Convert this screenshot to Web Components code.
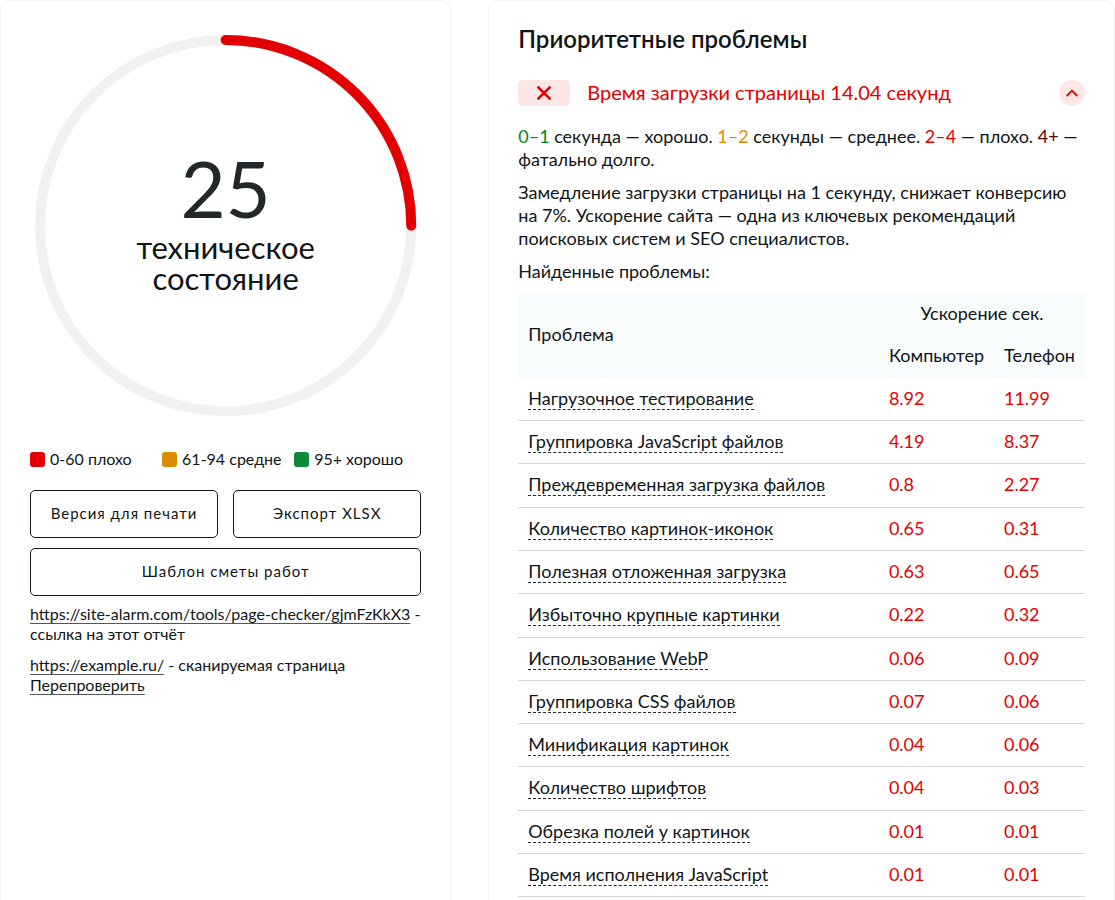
<!DOCTYPE html>
<html lang="ru">
<head>
<meta charset="utf-8">
<meta name="viewport" content="width=device-width, initial-scale=1">
<title>Проверка страницы</title>
<style>
  html { background: #fff; }
  body {
    margin: 0;
    color: #111516;
    font-family: Lato, "Open Sans", sans-serif;
    font-size: 18px;
    line-height: 1.24;
    --red: #e30000;
    --amber: #d98c00;
    --green: #0c8836;
  }
</style>
</head>
<body>
<report-page>
  <report-card slot="summary">
    <score-gauge value="25">техническое состояние</score-gauge>
    <score-legend></score-legend>
    <report-actions></report-actions>
    <report-links></report-links>
  </report-card>
  <report-card slot="details">
    <issue-list heading="Приоритетные проблемы">
      <issue-item heading="Время загрузки страницы 14.04 секунд">
        <load-notes></load-notes>
        <problem-table></problem-table>
      </issue-item>
    </issue-list>
  </report-card>
</report-page>

<script>
const define = (name, html, setup) => {
  const template = document.createElement('template');
  template.innerHTML = html;
  customElements.define(name, class extends HTMLElement {
    connectedCallback() {
      if (this.shadowRoot) return;
      const root = this.attachShadow({ mode: 'open' });
      root.append(template.content.cloneNode(true));
      if (setup) setup(root, this);
    }
  });
};

define('report-page', `
  <style>
    :host { display: block; }
    main { display: grid; grid-template-columns: minmax(0, 18fr) minmax(0, 25fr); column-gap: 37px; }
    @media (max-width: 760px) { main { grid-template-columns: minmax(0, 1fr); row-gap: 20px; } }
  </style>
  <main><slot name="summary"></slot><slot name="details"></slot></main>`);

define('report-card', `
  <style>
    :host { display: block; box-sizing: border-box; padding: 29px; border: 1px solid #f3f3f3; border-radius: 10px; background: #fff; }
  </style>
  <slot></slot>`);

define('score-gauge', `
  <style>
    :host { display: grid; }
    svg, .text { grid-area: 1 / 1; }
    svg { display: block; width: 100%; }
    circle { fill: none; stroke-width: 10; }
    .track { stroke: #f1f1f1; }
    .bar { stroke: var(--red); stroke-linecap: round; }
    .text { align-self: center; justify-self: center; width: 200px; padding-bottom: 10px; text-align: center; }
    .value { margin-bottom: 4px; font-size: 78px; line-height: 80px; color: #222829; }
    .label { font-size: 31px; line-height: 31px; }
  </style>
  <svg viewBox="0 0 391 391" aria-hidden="true">
    <circle class="track" cx="195.5" cy="195.5" r="185.5"/>
    <circle class="bar" cx="195.5" cy="195.5" r="185.5" pathLength="100" transform="rotate(-90 195.5 195.5)"/>
  </svg>
  <div class="text"><div class="value"></div><div class="label"><slot></slot></div></div>`,
  (root, host) => {
    const value = host.getAttribute('value');
    root.querySelector('.value').textContent = value;
    root.querySelector('.bar').setAttribute('stroke-dasharray', value + ' 100');
  });

define('score-legend', `
  <style>
    :host { display: block; margin-top: 28px; font-size: 16px; line-height: 20px; }
    ul { display: grid; grid-template-columns: repeat(3, minmax(0, 1fr)); column-gap: 5px; margin: 0; padding: 0; list-style: none; }
    li { display: flex; align-items: center; gap: 5px; white-space: nowrap; }
    i { width: 15px; height: 15px; border-radius: 3px; flex: none; }
    .bad { background: var(--red); }
    .mid { background: var(--amber); }
    .good { background: var(--green); }
  </style>
  <ul>
    <li><i class="bad"></i>0-60 плохо</li>
    <li><i class="mid"></i>61-94 средне</li>
    <li><i class="good"></i>95+ хорошо</li>
  </ul>`);

define('report-actions', `
  <style>
    :host { display: grid; grid-template-columns: 1fr 1fr; gap: 10px 15px; margin-top: 21px; }
    button { height: 48px; padding: 0 10px 2px; border: 1px solid #111516; border-radius: 5px; background: #fff; color: inherit; font: inherit; font-size: 15px; letter-spacing: 1px; cursor: pointer; }
    .wide { grid-column: 1 / -1; }
  </style>
  <button type="button">Версия для печати</button>
  <button type="button">Экспорт XLSX</button>
  <button type="button" class="wide">Шаблон сметы работ</button>`);

define('report-links', `
  <style>
    :host { display: block; margin-top: 8px; font-size: 16px; line-height: 20px; }
    p { margin: 0 0 11px; }
    a { color: inherit; text-decoration: underline 1px #555; text-underline-offset: 3px; text-decoration-skip-ink: none; }
  </style>
  <p><a href="https://site-alarm.com/tools/page-checker/gjmFzKkX3">https://site-alarm.com/tools/page-checker/gjmFzKkX3</a> - ссылка на этот отчёт</p>
  <p><a href="https://example.ru/">https://example.ru/</a> - сканируемая страница<br><a href="#recheck">Перепроверить</a></p>`);

define('issue-list', `
  <style>
    :host { display: block; }
    h2 { margin: -6px 0 26px; font-size: 24px; line-height: 30px; font-weight: 600; }
  </style>
  <h2></h2>
  <slot></slot>`,
  (root, host) => { root.querySelector('h2').textContent = host.getAttribute('heading'); });

define('issue-item', `
  <style>
    :host { display: block; }
    header { display: flex; align-items: flex-start; margin-bottom: 19px; color: var(--red); }
    .mark { display: grid; place-items: center; width: 52px; height: 26px; margin-right: 17px; border-radius: 5px; background: #fce6e6; flex: none; }
    h3 { flex: 1; margin: 0; font-size: 20px; line-height: 24px; font-weight: 400; }
    button { display: grid; place-items: center; width: 26px; height: 26px; padding: 0; border: 0; border-radius: 50%; background: #fce6e6; color: inherit; cursor: pointer; flex: none; }
    svg { display: block; fill: none; stroke: currentColor; stroke-linecap: round; stroke-linejoin: round; }
  </style>
  <header>
    <span class="mark"><svg width="16" height="16" viewBox="0 0 16 16" stroke-width="2.6"><path d="M2.3 2.3 13.7 13.7M13.7 2.3 2.3 13.7"/></svg></span>
    <h3></h3>
    <button type="button" aria-label="Свернуть" aria-expanded="true"><svg width="12" height="8" viewBox="0 0 12 8" stroke-width="1.8"><path d="M1.2 6.5 6 1.7l4.8 4.8"/></svg></button>
  </header>
  <slot></slot>`,
  (root, host) => { root.querySelector('h3').textContent = host.getAttribute('heading'); });

define('load-notes', `
  <style>
    :host { display: block; line-height: 23px; }
    p { margin: 0 0 10px; }
    .good { color: #008a24; }
    .mid { color: var(--amber); }
    .bad { color: var(--red); }
    .fatal { color: #600000; }
  </style>
  <p><span class="good">0–1</span> секунда — хорошо. <span class="mid">1–2</span> секунды — среднее. <span class="bad">2–4</span> — плохо. <span class="fatal">4+</span> — фатально долго.</p>
  <p>Замедление загрузки страницы на 1 секунду, снижает конверсию на 7%. Ускорение сайта — одна из ключевых рекомендаций поисковых систем и SEO специалистов.</p>
  <p>Найденные проблемы:</p>`);

const problems = [
  ['Нагрузочное тестирование', '8.92', '11.99'],
  ['Группировка JavaScript файлов', '4.19', '8.37'],
  ['Преждевременная загрузка файлов', '0.8', '2.27'],
  ['Количество картинок-иконок', '0.65', '0.31'],
  ['Полезная отложенная загрузка', '0.63', '0.65'],
  ['Избыточно крупные картинки', '0.22', '0.32'],
  ['Использование WebP', '0.06', '0.09'],
  ['Группировка CSS файлов', '0.07', '0.06'],
  ['Минификация картинок', '0.04', '0.06'],
  ['Количество шрифтов', '0.04', '0.03'],
  ['Обрезка полей у картинок', '0.01', '0.01'],
  ['Время исполнения JavaScript', '0.01', '0.01']
];

define('problem-table', `
  <style>
    :host { display: block; }
    table { width: 100%; border-collapse: collapse; }
    th, td { padding: 9px 10px 11px; text-align: left; font-weight: 400; }
    th { background: #f8fcfd; }
    th[colspan] { text-align: center; }
    th:not([rowspan]) { width: 1px; white-space: nowrap; }
    td { border-bottom: 1px solid #d6d6d6; color: var(--red); }
    a { color: #111516; text-decoration: none; border-bottom: 1px dashed #222829; }
  </style>
  <table>
    <thead>
      <tr><th rowspan="2" scope="col">Проблема</th><th colspan="2" scope="colgroup">Ускорение сек.</th></tr>
      <tr><th scope="col">Компьютер</th><th scope="col">Телефон</th></tr>
    </thead>
    <tbody></tbody>
  </table>`,
  root => {
    root.querySelector('tbody').innerHTML = problems.map(([name, desktop, phone], i) =>
      `<tr><td><a href="#problem-${i + 1}">${name}</a></td><td>${desktop}</td><td>${phone}</td></tr>`).join('');
  });
</script>
</body>
</html>
